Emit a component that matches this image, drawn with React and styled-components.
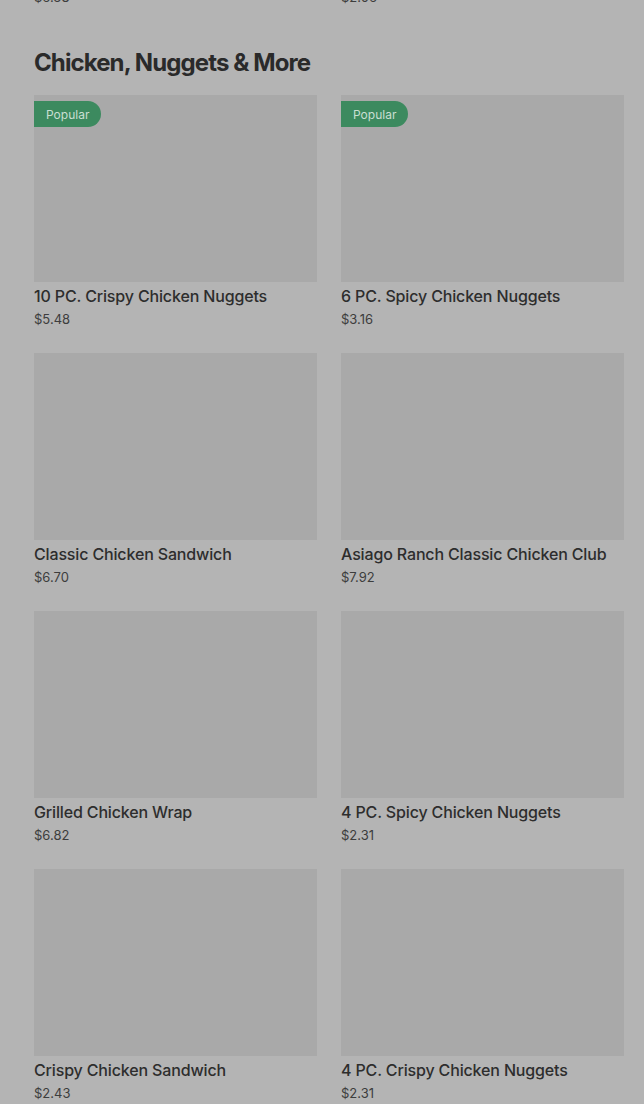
import React from "react";
import styled, { createGlobalStyle } from "styled-components";

const items = [
  { name: "10 PC. Crispy Chicken Nuggets", price: "$5.48", popular: true },
  { name: "6 PC. Spicy Chicken Nuggets", price: "$3.16", popular: true },
  { name: "Classic Chicken Sandwich", price: "$6.70" },
  { name: "Asiago Ranch Classic Chicken Club", price: "$7.92" },
  { name: "Grilled Chicken Wrap", price: "$6.82" },
  { name: "4 PC. Spicy Chicken Nuggets", price: "$2.31" },
  { name: "Crispy Chicken Sandwich", price: "$2.43" },
  { name: "4 PC. Crispy Chicken Nuggets", price: "$2.31" },
];

function App() {
  return (
    <>
      <GlobalStyle />
      <Page>
        <PrevRow>
          <Price>$6.38</Price>
          <Price>$2.06</Price>
        </PrevRow>
        <Heading>Chicken, Nuggets &amp; More</Heading>
        <Grid>
          {items.map((item) => (
            <Card key={item.name}>
              <Thumb>{item.popular && <Badge>Popular</Badge>}</Thumb>
              <Title>{item.name}</Title>
              <Price>{item.price}</Price>
            </Card>
          ))}
        </Grid>
      </Page>
    </>
  );
}

export default App;

const GlobalStyle = createGlobalStyle`
  html, body {
    margin: 0;
    background: #b4b4b4;
    overflow: hidden;
  }
  body {
    font-family: Inter, "Liberation Sans", sans-serif;
    color: #2b2b2b;
  }
`;

const Page = styled.div`
  margin-top: -16px;
  padding: 0 20px 0 34px;
`;

const PrevRow = styled.div`
  display: grid;
  grid-template-columns: 1fr 1fr;
  column-gap: 24px;
`;

const Heading = styled.h2`
  margin: 40px 0 16px;
  font-size: 24px;
  line-height: 32px;
  font-weight: 700;
  letter-spacing: -0.9px;
  color: #2a2a2a;
`;

const Grid = styled.div`
  display: grid;
  grid-template-columns: 1fr 1fr;
  column-gap: 24px;
  row-gap: 24px;
`;

const Card = styled.div`
  display: flex;
  flex-direction: column;
`;

const Thumb = styled.div`
  height: 187px;
  background: #a9a9a9;
  padding-top: 6px;
  box-sizing: border-box;
`;

const Badge = styled.span`
  display: inline-flex;
  align-items: center;
  height: 26px;
  padding: 0 12px;
  background: #3c8a5f;
  color: #c9dfd2;
  font-size: 12px;
  border-radius: 0 13px 13px 0;
`;

const Title = styled.div`
  margin-top: 4px;
  font-size: 16px;
  line-height: 20px;
  font-weight: 500;
  letter-spacing: -0.15px;
  color: #2d2d2d;
  white-space: nowrap;
`;

const Price = styled.div`
  margin-top: 3px;
  font-size: 13px;
  line-height: 20px;
  color: #3d3d3d;
`;
